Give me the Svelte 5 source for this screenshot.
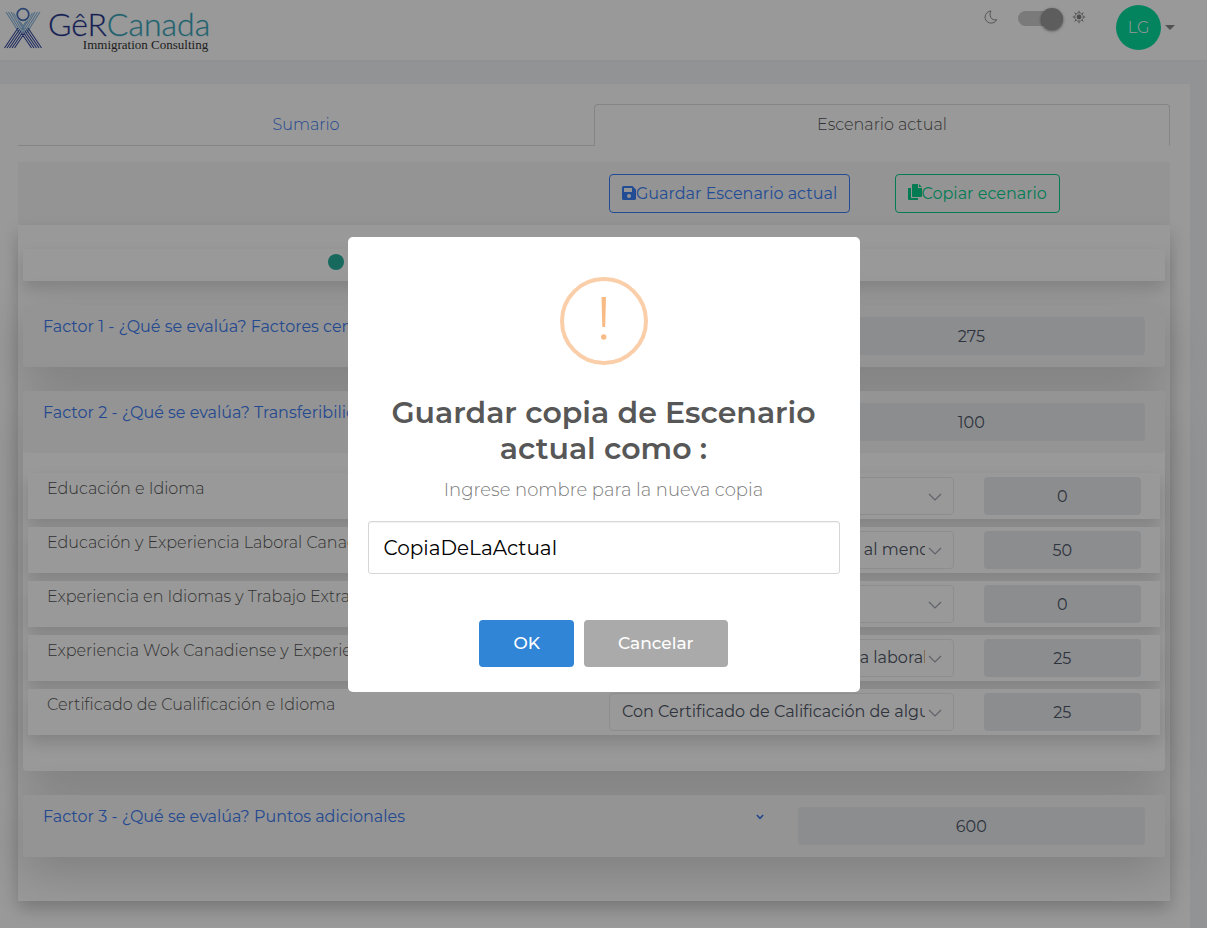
<script>
  let name = $state('CopiaDeLaActual');
  let light = $state(true);

  const rows = [
    { id: 'edu-idioma', label: 'Educación e Idioma', option: '', score: 0 },
    { id: 'edu-exp', label: 'Educación y Experiencia Laboral Canadiense', option: 'Con estudios y experiencia de al menos un año', score: 50 },
    { id: 'idioma-ext', label: 'Experiencia en Idiomas y Trabajo Extranjero', option: '', score: 0 },
    { id: 'exp-exp', label: 'Experiencia Wok Canadiense y Experiencia Extranjera', option: 'Dos años o más de experiencia laboral', score: 25 },
    { id: 'cert', label: 'Certificado de Cualificación e Idioma', option: 'Con Certificado de Calificación de alguna provincia', score: 25 }
  ];
</script>

{#snippet factor(id, text, score)}
  <div class="factor-head">
    <div class="factor-title">
      <a href="#{id}">{text}</a>
      <svg width="8" height="6" viewBox="0 0 8 6" fill="none" stroke="currentColor" stroke-width="1.5" aria-hidden="true"><path d="M.8 1 4 4.3 7.2 1" /></svg>
    </div>
    <div class="cell"><input class="score" aria-label={text} value={score} readonly /></div>
  </div>
{/snippet}

<header class="topbar">
  <a class="brand" href="#inicio" aria-label="GêRCanada Immigration Consulting">
    <svg class="mark" width="40" height="42" viewBox="0 0 40 42" fill="none" aria-hidden="true">
      <g stroke="#86b4dc" stroke-width="1.100">
        <path d="M3 5 17 27M5.500 5 18.500 26M8 5 20 25M10.500 6 21.500 24M13 8 23 24M37 5 23 27M34.500 5 21.500 26M32 5 20 25M29.500 6 18.500 24M27 8 17 24" />
      </g>
      <g stroke="#3549a0" stroke-width="1.100">
        <path d="M1.500 41 15 21M4 41 16.500 22.500M6.500 41 18 24M9 41 19.500 25.500M11.500 41 21 27M38.500 41 25 21M36 41 23.500 22.500M33.500 41 22 24M31 41 20.500 25.500M28.500 41 19 27" />
      </g>
      <circle cx="20" cy="7.500" r="7.500" fill="#fff" />
      <circle cx="20" cy="7.500" r="5.800" stroke="#4774ba" stroke-width="1.800" />
    </svg>
    <span class="wordmark">
      <span class="word"><span class="ger">GêR</span><span class="can">Canada</span></span>
      <span class="tagline">Immigration Consulting</span>
    </span>
  </a>
  <div class="tools">
    <svg width="14" height="14" viewBox="0 0 14 14" fill="none" stroke="#8d8d8d" aria-hidden="true"><path d="M7 1C2 1.500-.1 6.500 1.800 10c2.200 4 8.700 4.300 10.900-.3-2.700.7-5-.2-6-2.500C5.700 4.800 6 2.500 7 1z" /></svg>
    <input class="switch" type="checkbox" role="switch" aria-label="Modo claro" bind:checked={light} />
    <svg width="14" height="14" viewBox="0 0 14 14" fill="none" stroke="#808080" aria-hidden="true"><circle cx="7" cy="7" r="4.200" stroke-width=".8" /><circle cx="7" cy="7" r="2.400" fill="#808080" stroke="none" /><path d="M7 .8v2M7 11.200v2M.8 7h2M11.200 7h2M2.600 2.600l1.400 1.400M10 10l1.400 1.400M2.600 11.400L4 10M10 4l1.400-1.400" /></svg>
  </div>
  <button class="user" type="button" aria-label="Cuenta LG">
    <span class="avatar">LG</span><span class="caret"></span>
  </button>
</header>

<main class="sheet">
  <nav class="tabs">
    <a class="tab" href="#sumario">Sumario</a>
    <a class="tab active" href="#actual">Escenario actual</a>
  </nav>

  <div class="actions">
    <div class="save">
      <button class="btn blue" type="button">
        <svg width="14" height="18" viewBox="0 0 14 18" fill="currentColor" fill-rule="evenodd" aria-hidden="true"><path d="M1.500 1h9L14 4.500v9a1.500 1.500 0 0 1-1.500 1.500h-11A1.500 1.500 0 0 1 0 13.500v-11A1.500 1.500 0 0 1 1.500 1zM2 3v4h8V3zM7 9a2 2 0 1 0 0 4 2 2 0 0 0 0-4z" /></svg>Guardar Escenario actual</button>
    </div>
    <div class="copy">
      <button class="btn green" type="button">
        <svg width="14" height="20" viewBox="0 0 14 20" fill="currentColor" aria-hidden="true"><path d="M0 4h3v10h7v2H1a1 1 0 0 1-1-1zM5 0h5v4h4v8a1 1 0 0 1-1 1H5a1 1 0 0 1-1-1V1a1 1 0 0 1 1-1zM11 0l3 3h-3z" /></svg>Copiar ecenario</button>
    </div>
  </div>

  <section class="panel">
    <div class="strip"><span class="dot"></span></div>

    <article class="factor">{@render factor('factor1', 'Factor 1 - ¿Qué se evalúa? Factores centrales', 275)}</article>

    <article class="factor">
      {@render factor('factor2', 'Factor 2 - ¿Qué se evalúa? Transferibilidad', 100)}
      <div class="rows">
        {#each rows as row}
          <div class="row">
            <label for={row.id}>{row.label}</label>
            <div class="cell">
              <div class="picker">
                <select id={row.id}><option>{row.option}</option></select>
                <svg width="14" height="8" viewBox="0 0 14 8" fill="none" stroke="#a0a4ae" stroke-width="1.200" aria-hidden="true"><path d="M1 1l6 6 6-6" /></svg>
              </div>
            </div>
            <div class="cell"><input class="score" aria-label="Puntos {row.label}" value={row.score} readonly /></div>
          </div>
        {/each}
      </div>
    </article>

    <article class="factor">{@render factor('factor3', 'Factor 3 - ¿Qué se evalúa? Puntos adicionales', 600)}</article>
  </section>
</main>

<div class="overlay">
  <div class="dialog" role="dialog" aria-modal="true" aria-labelledby="dlg-title">
    <svg class="warn" width="88" height="88" viewBox="0 0 88 88" aria-hidden="true">
      <circle cx="44" cy="44" r="42" fill="none" stroke="#facea8" stroke-width="4" />
      <path d="M41.500 20h4.500l-.8 30h-2.900z" fill="#f8bb86" />
      <circle cx="43.700" cy="60" r="2.700" fill="#f8bb86" />
    </svg>
    <h2 id="dlg-title">Guardar copia de Escenario actual como :</h2>
    <label for="copy-name">Ingrese nombre para la nueva copia</label>
    <input id="copy-name" type="text" bind:value={name} />
    <div class="buttons">
      <button class="ok" type="button">OK</button>
      <button class="cancel" type="button">Cancelar</button>
    </div>
  </div>
</div>

<style>
  :global(body) {
    margin: 0;
    background: #f3f6f9;
    font: 300 16px/24px Montserrat, Inter, sans-serif;
    color: #555;
  }
  :global(*) { box-sizing: border-box; }
  a { text-decoration: none; color: #3d7bf0; }
  button, input, select { font: inherit; }
  svg { flex: none; }

  .topbar {
    display: flex;
    align-items: flex-start;
    height: 60px;
    padding: 5px 32px 0 3px;
    background: #fff;
    box-shadow: 0 1px 2px rgba(0, 0, 0, .04);
  }
  .brand { display: flex; gap: 5px; margin-right: auto; padding-top: 2px; }
  .wordmark { display: flex; flex-direction: column; }
  .word { font: 300 32px/34px Lato, sans-serif; white-space: nowrap; }
  .ger { color: #24348c; -webkit-text-stroke: 1px #24348c44; }
  .can { color: #35a3b8; -webkit-text-stroke: 1px #35a3b844; }
  .tagline {
    padding-right: 2px;
    font: 400 13px/8px "Liberation Serif", serif;
    color: #333;
    text-align: right;
  }
  .tools { display: flex; gap: 20px; padding-top: 5px; }
  .switch {
    appearance: none;
    display: flex;
    align-items: center;
    justify-content: flex-end;
    width: 45px;
    height: 15px;
    margin: 1px -11px 0 0;
    border-radius: 8px;
    background: #ccc;
  }
  .switch::after {
    content: "";
    flex: none;
    width: 22px;
    height: 22px;
    border-radius: 50%;
    background: #9b9b9b;
    box-shadow: 0 1px 3px rgba(0, 0, 0, .5);
  }
  .switch:not(:checked) { justify-content: flex-start; }
  .user {
    display: flex;
    align-items: center;
    gap: 4px;
    margin-left: 30px;
    padding: 0;
    border: 0;
    background: none;
  }
  .avatar {
    width: 45px;
    border-radius: 50%;
    background: #06dc9f;
    color: #fff;
    line-height: 45px;
  }
  .caret { border: 5px solid transparent; border-top-color: #888; border-bottom: 0; }

  .sheet { margin: 24px 17px 0 0; padding: 20px 20px 27px 18px; background: #fff; }
  .tabs {
    display: grid;
    grid-template-columns: 1fr 1fr;
    height: 42px;
    border-bottom: 1px solid #dcdcdc;
    text-align: center;
  }
  .tab { height: 42px; padding: 8px; border: 1px solid transparent; }
  .active {
    border-color: #dcdcdc #dcdcdc #fff;
    border-radius: 4px 4px 0 0;
    background: #fff;
    color: #555;
  }

  .actions {
    display: grid;
    grid-template-columns: 6fr 3fr 3fr;
    margin-top: 16px;
    padding: 12px 5px;
    background: #f7f7f7;
  }
  .save { grid-column: 2; padding-left: 15px; }
  .copy { padding-left: 15px; }
  .btn {
    display: flex;
    align-items: center;
    height: 39px;
    padding: 0 12px;
    border: 1px solid;
    border-radius: 4px;
    background: none;
    font-weight: 400;
    white-space: nowrap;
  }
  .blue { color: #3a80f7; }
  .green { color: #06cf8d; }

  .panel {
    padding: 24px 5px 44px;
    background: #fff;
    box-shadow: 0 8px 16px rgba(0, 0, 0, .2);
  }
  .strip {
    height: 32px;
    padding: 5px 0 0 305px;
    background: #fff;
    box-shadow: 0 8px 16px rgba(0, 0, 0, .15);
  }
  .dot { display: block; width: 16px; height: 16px; border-radius: 50%; background: #27ae9c; }
  .factor {
    margin-top: 24px;
    border-radius: 4px;
    background: #fff;
    box-shadow: 0 16px 48px rgba(0, 0, 0, .175);
  }
  .factor-head {
    display: grid;
    grid-template-columns: 2fr 1fr;
    padding: 12px 5px;
    border-radius: 4px;
    background: #f7f7f7;
  }
  .factor-title {
    display: flex;
    justify-content: space-between;
    align-items: center;
    height: 20px;
    padding: 0 19px 0 15px;
    color: #3573ef;
    font-weight: 400;
    white-space: nowrap;
  }
  .cell { min-width: 0; padding: 0 15px; }
  .score {
    display: block;
    width: 100%;
    height: 38px;
    border: 0;
    border-radius: 4px;
    background: #e9ecef;
    color: #4f5668;
    text-align: center;
    font-weight: 400;
  }
  .rows { display: grid; gap: 8px; padding: 20px 5px 36px; }
  .row {
    display: grid;
    grid-template-columns: 6fr 4fr 2fr;
    padding: 4px;
    background: #fff;
    box-shadow: 0 8px 16px rgba(0, 0, 0, .15);
  }
  .row label { padding-left: 15px; white-space: nowrap; }
  .picker { position: relative; }
  .picker select {
    appearance: none;
    display: block;
    width: 100%;
    height: 38px;
    padding: 0 28px 0 12px;
    border: 1px solid #eaecef;
    border-radius: 4px;
    background: #fff;
    color: #4f5668;
    font-weight: 400;
  }
  .picker svg { position: absolute; right: 12px; top: 16px; pointer-events: none; }

  .overlay {
    position: fixed;
    inset: 0;
    display: grid;
    place-items: center;
    background: rgba(0, 0, 0, .4);
  }
  .dialog {
    display: flex;
    flex-direction: column;
    align-items: center;
    width: 512px;
    padding: 40px 20px 25px;
    border-radius: 5px;
    background: #fff;
    text-align: center;
  }
  h2 { margin: 30px 0 12px; font-size: 30px; line-height: 36px; font-weight: 600; color: #575757; }
  .dialog label { font-size: 18px; line-height: 22px; color: #797979; }
  .dialog input {
    width: 100%;
    height: 53px;
    margin: 20px 0 46px;
    padding: 2px 15px 0;
    border: 1px solid #d7d7d7;
    border-radius: 3px;
    box-shadow: inset 0 1px 1px rgba(0, 0, 0, .06);
    color: #000;
    font-size: 20px;
    font-weight: 400;
  }
  .buttons { display: flex; gap: 10px; }
  .buttons button {
    height: 47px;
    padding: 0 34px;
    border: 0;
    border-radius: 4px;
    color: #fff;
    font-size: 17px;
    font-weight: 500;
  }
  .buttons .ok { background: #3085d6; }
  .buttons .cancel { background: #aaa; }
</style>
